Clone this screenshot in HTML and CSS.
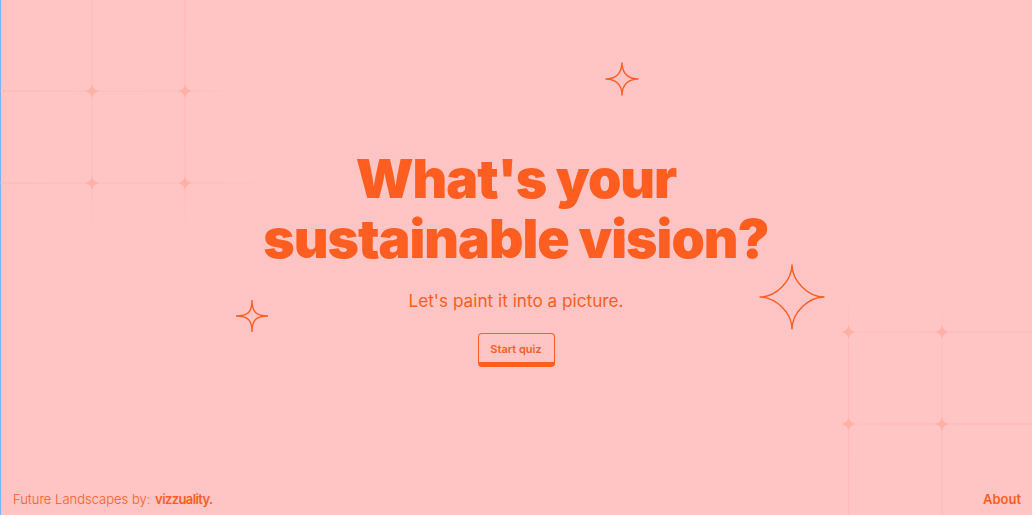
FILE: index.html
```html
<!DOCTYPE html>
<html lang="en">
<head>
<meta charset="utf-8">
<title>Future Landscapes</title>
<link rel="stylesheet" href="styles.css">
</head>
<body>
<div class="page">
  <svg class="grid grid-left" width="280" height="240" viewBox="0 0 280 240" aria-hidden="true">
    <defs>
      <linearGradient id="fadeDown" x1="0" y1="0" x2="0" y2="1">
        <stop offset="0" stop-color="#ffb3ad" stop-opacity="0.7"/>
        <stop offset="0.75" stop-color="#ffb3ad" stop-opacity="0.5"/>
        <stop offset="1" stop-color="#ffb3ad" stop-opacity="0"/>
      </linearGradient>
      <linearGradient id="fadeRight" x1="0" y1="0" x2="1" y2="0">
        <stop offset="0" stop-color="#ffb3ad" stop-opacity="0.7"/>
        <stop offset="0.75" stop-color="#ffb3ad" stop-opacity="0.5"/>
        <stop offset="1" stop-color="#ffb3ad" stop-opacity="0"/>
      </linearGradient>
      <path id="dia" d="M0 -7 Q1.2 -1.2 7 0 Q1.2 1.2 0 7 Q-1.2 1.2 -7 0 Q-1.2 -1.2 0 -7Z"/>
    </defs>
    <rect x="91.5" y="0" width="1" height="235" fill="url(#fadeDown)"/>
    <rect x="184.5" y="0" width="1" height="235" fill="url(#fadeDown)"/>
    <rect x="0" y="90.5" width="240" height="1" fill="url(#fadeRight)"/>
    <rect x="0" y="182.5" width="270" height="1" fill="url(#fadeRight)"/>
    <g fill="#ffb0a6">
      <use href="#dia" x="92" y="91"/>
      <use href="#dia" x="185" y="91"/>
      <use href="#dia" x="92" y="183"/>
      <use href="#dia" x="185" y="183"/>
    </g>
  </svg>

  <svg class="grid grid-right" width="232" height="235" viewBox="800 280 232 235" aria-hidden="true">
    <defs>
      <linearGradient id="fadeUp" x1="0" y1="1" x2="0" y2="0">
        <stop offset="0" stop-color="#ffb3ad" stop-opacity="0.6"/>
        <stop offset="0.7" stop-color="#ffb3ad" stop-opacity="0.5"/>
        <stop offset="1" stop-color="#ffb3ad" stop-opacity="0"/>
      </linearGradient>
      <linearGradient id="fadeLeft" x1="1" y1="0" x2="0" y2="0">
        <stop offset="0" stop-color="#ffb3ad" stop-opacity="0.6"/>
        <stop offset="0.7" stop-color="#ffb3ad" stop-opacity="0.5"/>
        <stop offset="1" stop-color="#ffb3ad" stop-opacity="0"/>
      </linearGradient>
      <path id="dia2" d="M0 -7 Q1.2 -1.2 7 0 Q1.2 1.2 0 7 Q-1.2 1.2 -7 0 Q-1.2 -1.2 0 -7Z"/>
    </defs>
    <rect x="848" y="290" width="1" height="225" fill="url(#fadeUp)"/>
    <rect x="941.5" y="290" width="1" height="225" fill="url(#fadeUp)"/>
    <rect x="825" y="331.5" width="207" height="1" fill="url(#fadeLeft)"/>
    <rect x="825" y="423.5" width="207" height="1" fill="url(#fadeLeft)"/>
    <g fill="#ffb0a6">
      <use href="#dia2" x="848.5" y="332"/>
      <use href="#dia2" x="942" y="332"/>
      <use href="#dia2" x="848.5" y="424"/>
      <use href="#dia2" x="942" y="424"/>
    </g>
  </svg>

  <svg class="spark spark-top" width="36" height="36" viewBox="-18 -18 36 36" aria-hidden="true">
    <path d="M0 -16.5 C0 -6 6 0 16.5 0 C6 0 0 6 0 16.5 C0 6 -6 0 -16.5 0 C-6 0 0 -6 0 -16.5Z"/>
  </svg>
  <svg class="spark spark-left" width="34" height="34" viewBox="-17 -17 34 34" aria-hidden="true">
    <path d="M0 -16 C0 -4 4 0 16 0 C4 0 0 4 0 16 C0 4 -4 0 -16 0 C-4 0 0 -4 0 -16Z"/>
  </svg>
  <svg class="spark spark-big" width="90" height="90" viewBox="-45 -45 90 90" aria-hidden="true">
    <circle class="dot" cx="-40" cy="-44" r="4.5"/>
    <path d="M0 -32.5 C0 -16 16 0 32.5 0 C16 0 0 16 0 32.5 C0 16 -16 0 -32.5 0 C-16 0 0 -16 0 -32.5Z"/>
  </svg>

  <main class="hero">
    <h1 class="title">What's your<br>sustainable vision?</h1>
    <p class="lead">Let's paint it into a picture.</p>
    <button class="btn" type="button">Start quiz</button>
  </main>

  <footer class="footer">
    <p class="credit">Future Landscapes by: <strong>vizzuality.</strong></p>
    <a class="about" href="#">About</a>
  </footer>
</div>
</body>
</html>
```

FILE: styles.css
```css
* { box-sizing: border-box; }

html, body {
  margin: 0;
  padding: 0;
  height: 100%;
}

body {
  background: #ffc4c4;
  color: #ff5e20;
  font-family: Inter, "Noto Sans", "Liberation Sans", sans-serif;
  box-shadow: inset 1px 0 0 #74b3f2;
  overflow: hidden;
}

.page {
  position: relative;
  height: 515px;
  display: flex;
  flex-direction: column;
}

.grid {
  position: absolute;
  pointer-events: none;
}
.grid-left { left: 0; top: 0; }
.grid-right { left: 800px; top: 280px; }

.spark {
  position: absolute;
  fill: none;
  stroke: #ff5e20;
  stroke-width: 1.4;
}
.spark-top { left: 604px; top: 61px; }
.spark-left { left: 235px; top: 299px; }
.spark-big { left: 747px; top: 252px; }
.spark .dot { fill: #ff5e20; stroke: none; }

.hero {
  flex: 1;
  display: flex;
  flex-direction: column;
  align-items: center;
  padding-top: 149px;
  position: relative;
}

.title {
  margin: 0;
  font-size: 53.5px;
  line-height: 60px;
  font-weight: 900;
  letter-spacing: -1px;
  text-align: center;
}

.lead {
  margin: 20px 0 0;
  font-size: 17.2px;
  line-height: 24px;
  font-weight: 400;
}

.btn {
  margin-top: 20px;
  width: 77px;
  height: 34px;
  padding: 1px 0 0;
  background: transparent;
  border: 1.5px solid #ff5e20;
  border-bottom-width: 5px;
  border-radius: 4px;
  color: #ff5e20;
  font-family: inherit;
  font-size: 11px;
  font-weight: 600;
  cursor: pointer;
}

.footer {
  display: flex;
  justify-content: space-between;
  align-items: baseline;
  padding: 0 11px 8px 13px;
  font-size: 13px;
  line-height: 16px;
}

.credit {
  margin: 0;
  font-weight: 300;
}
.credit strong {
  font-weight: 600;
  letter-spacing: -0.6px;
  margin-left: 1px;
}

.about {
  color: #ff5e20;
  text-decoration: none;
  font-weight: 600;
}
```
